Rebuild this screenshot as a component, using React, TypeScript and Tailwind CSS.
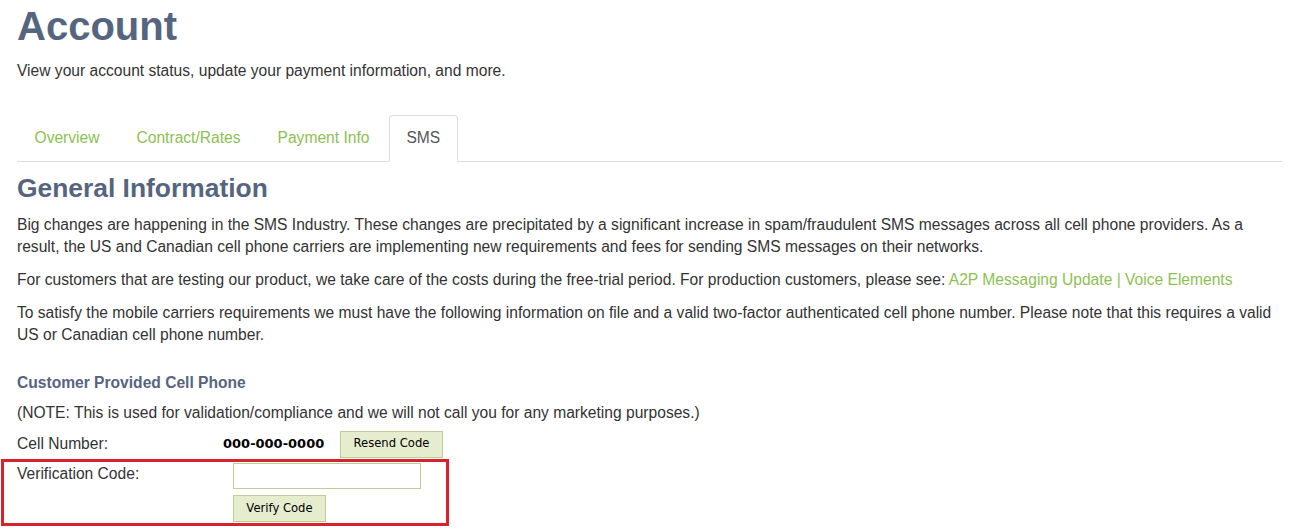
export default function App() {
  const tabs = ["Overview", "Contract/Rates", "Payment Info", "SMS"]
  const active = "SMS"

  return (
    <div className="min-h-[530px] bg-white font-['Liberation_Sans',Arial,sans-serif] text-[15.6px] text-[#333] px-[17px] pr-[33px]">
      {/* Page header */}
      <h1 className="text-[40px] font-bold leading-[50px] text-[#56657f] pt-[1px]">Account</h1>
      <p className="mt-[9px] leading-[22px]">
        View your account status, update your payment information, and more.
      </p>

      {/* Tabs */}
      <div className="mt-[33px] flex border-b border-[#ddd]">
        {tabs.map((tab) => (
          <div
            key={tab}
            className={`mr-[2px] -mb-px px-[16.5px] pt-[11px] pb-[12px] leading-[22px] rounded-t border ${
              tab === active
                ? "border-[#ddd] border-b-white bg-white text-[#555]"
                : "border-transparent text-[#8cc152]"
            }`}
          >
            {tab}
          </div>
        ))}
      </div>

      {/* Content */}
      <h2 className="mt-[10px] text-[26.4px] font-bold leading-[32px] text-[#56657f]">General Information</h2>
      <div className="mt-[10px] leading-[22px] space-y-[11px]">
        <p>
          Big changes are happening in the SMS Industry. These changes are precipitated by a significant increase in
          spam/fraudulent SMS messages across all cell phone providers. As a result, the US and Canadian cell phone
          carriers are implementing new requirements and fees for sending SMS messages on their networks.
        </p>
        <p>
          For customers that are testing our product, we take care of the costs during the free-trial period. For
          production customers, please see: <a className="text-[#8cc152]">A2P Messaging Update | Voice Elements</a>
        </p>
        <p>
          To satisfy the mobile carriers requirements we must have the following information on file and a valid
          two-factor authenticated cell phone number. Please note that this requires a valid US or Canadian cell phone
          number.
        </p>
      </div>

      <h3 className="mt-[26px] font-bold leading-[22px] text-[#56657f]">Customer Provided Cell Phone</h3>
      <p className="mt-[8px] leading-[22px]">
        (NOTE: This is used for validation/compliance and we will not call you for any marketing purposes.)
      </p>

      {/* Cell number row */}
      <div className="mt-[6px] flex items-center h-[28px]">
        <div className="w-[206px]">Cell Number:</div>
        <div className="w-[117px] font-['DejaVu_Sans',Verdana,sans-serif] text-[13px] font-bold text-black">
          000-000-0000
        </div>
        <button className="h-[27px] w-[103px] bg-[#e6edcf] border border-[#c0cb97] font-['DejaVu_Sans',Verdana,sans-serif] text-[11.6px] text-black">
          Resend Code
        </button>
      </div>

      {/* Verification (highlighted) */}
      <div className="-ml-[16px] mt-[1px] w-[448px] h-[67px] border-[3px] border-[#d8232d] pl-[13px] pt-[1px]">
        <div className="flex">
          <div className="w-[216px] leading-[20px] pt-[1px]">Verification Code:</div>
          <div className="flex flex-col gap-[6px]">
            <input className="w-[188px] h-[26px] border border-[#c0cb97] bg-white outline-none px-1" />
            <button className="w-[93px] h-[27px] bg-[#e6edcf] border border-[#c0cb97] font-['DejaVu_Sans',Verdana,sans-serif] text-[11.6px] text-black">
              Verify Code
            </button>
          </div>
        </div>
      </div>
    </div>
  )
}
